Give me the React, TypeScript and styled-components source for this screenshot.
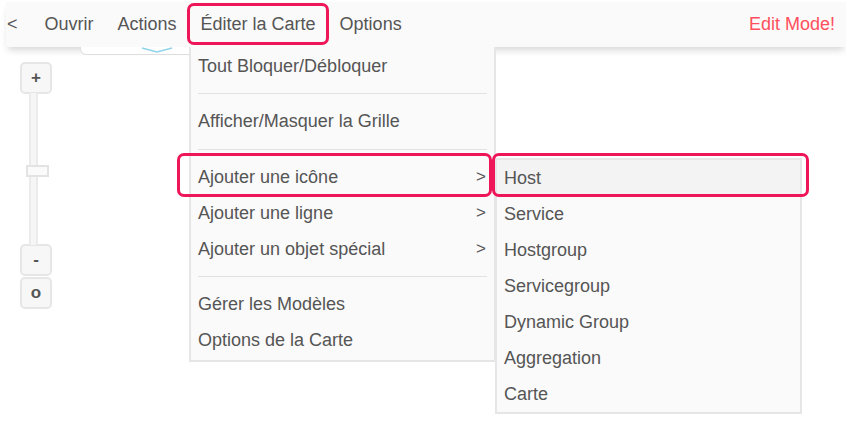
import React from "react";
import styled, { createGlobalStyle, css } from "styled-components";

const GlobalStyle = createGlobalStyle`
  html, body { margin: 0; padding: 0; background: #ffffff; }
  body { font-family: "Liberation Sans", Arial, sans-serif; }
  * { box-sizing: border-box; }
`;

const ACCENT = "#ee1558";

const Page = styled.div`
  position: relative;
  width: 846px;
  height: 423px;
  padding: 2px 0 0 6px;
  overflow: hidden;
`;

const TopBar = styled.div`
  position: relative;
  z-index: 2;
  display: flex;
  align-items: center;
  height: 45px;
  background: #fafafa;
  box-shadow: 0 5px 7px -2px rgba(0, 0, 0, 0.16);
`;

const NavItem = styled.div<{ $marked?: boolean; $back?: boolean }>`
  position: relative;
  display: flex;
  align-items: center;
  height: 100%;
  padding: ${(p) => (p.$back ? "0 15px 0 1px" : "0 12px")};
  font-size: 18px;
  color: #555555;
  white-space: nowrap;
  ${(p) =>
    p.$marked &&
    css`
      &::after {
        content: "";
        position: absolute;
        top: 1px;
        bottom: 2px;
        left: -1.5px;
        right: -1.5px;
        border: 3px solid ${ACCENT};
        border-radius: 7px;
        pointer-events: none;
        z-index: 5;
      }
    `}
`;

const Spacer = styled.div`
  flex: 1;
`;

const EditMode = styled.div`
  padding-right: 11px;
  font-size: 18px;
  color: #ff4f5e;
`;

const PullTab = styled.div`
  position: absolute;
  left: 74px;
  top: 100%;
  width: 130px;
  height: 8px;
  background: #ffffff;
  border: 1px solid #dedede;
  border-top: none;
  border-radius: 0 0 6px 6px;
  z-index: -1;
  display: flex;
  align-items: flex-start;
  padding-left: 60px;
`;

const Dropdown = styled.div`
  position: absolute;
  top: 100%;
  left: 0.5px;
  width: 307px;
  padding: 1px 0 1.5px;
  background: #fafafa;
  border: 2px solid #e6e6e6;
  border-top: none;
  z-index: 3;
`;

const MenuItem = styled.div<{ $active?: boolean }>`
  position: relative;
  display: flex;
  align-items: center;
  justify-content: space-between;
  height: 36px;
  padding: 0 8px 0 7px;
  font-size: 18px;
  color: #555555;
  white-space: nowrap;
  background: ${(p) => (p.$active ? "#f3f3f3" : "transparent")};
`;

const MarkFrame = styled.span<{ $t: number; $r: number; $b: number; $l: number }>`
  position: absolute;
  top: ${(p) => p.$t}px;
  right: ${(p) => p.$r}px;
  bottom: ${(p) => p.$b}px;
  left: ${(p) => p.$l}px;
  border: 3px solid ${ACCENT};
  border-radius: 7px;
  pointer-events: none;
  z-index: 6;
`;

const Arrow = styled.span`
  font-size: 17px;
`;

const Divider = styled.div`
  height: 1px;
  margin: 9px 7px 9.5px;
  background: #e2e2e2;
`;

const SubMenu = styled.div`
  position: absolute;
  top: -1px;
  left: calc(100% + 1px);
  width: 307px;
  background: #fafafa;
  border: 2px solid #e6e6e6;
  z-index: 4;
`;

const ZoomColumn = styled.div`
  display: flex;
  flex-direction: column;
  width: 32px;
  margin: 15px 0 0 14px;
`;

const ZoomButton = styled.div<{ $gap?: number }>`
  display: flex;
  align-items: center;
  justify-content: center;
  width: 32px;
  height: 32px;
  margin-top: ${(p) => p.$gap ?? 0}px;
  background: #f7f7f7;
  border: 2px solid #e6e6e6;
  border-radius: 5px;
  font-size: 17px;
  font-weight: bold;
  color: #555555;
`;

const Track = styled.div`
  position: relative;
  width: 9px;
  height: 152px;
  margin: -1px 0 -1px 9px;
  background: #f6f6f6;
  border-left: 2px solid #ebebeb;
  border-right: 2px solid #ebebeb;
`;

const Thumb = styled.div`
  position: absolute;
  left: -5px;
  top: 72px;
  width: 23px;
  height: 12px;
  background: #fafafa;
  border: 2px solid #e3e3e3;
`;

const subItems = [
  "Host",
  "Service",
  "Hostgroup",
  "Servicegroup",
  "Dynamic Group",
  "Aggregation",
  "Carte",
];

export default function App() {
  return (
    <>
      <GlobalStyle />
      <Page>
        <TopBar>
          <NavItem $back>&lt;</NavItem>
          <NavItem>Ouvrir</NavItem>
          <NavItem>Actions</NavItem>
          <NavItem $marked>
            Éditer la Carte
            <Dropdown>
              <MenuItem>Tout Bloquer/Débloquer</MenuItem>
              <Divider />
              <MenuItem>Afficher/Masquer la Grille</MenuItem>
              <Divider />
              <MenuItem>
                Ajouter une icône
                <Arrow>&gt;</Arrow>
                <MarkFrame $t={-6} $r={2} $b={-2} $l={-14} />
                <SubMenu>
                  {subItems.map((s, i) => (
                    <MenuItem key={s} $active={i === 0}>
                      {s}
                      {i === 0 && <MarkFrame $t={-7} $r={-9} $b={-1} $l={-5} />}
                    </MenuItem>
                  ))}
                </SubMenu>
              </MenuItem>
              <MenuItem>
                Ajouter une ligne
                <Arrow>&gt;</Arrow>
              </MenuItem>
              <MenuItem>
                Ajouter un objet spécial
                <Arrow>&gt;</Arrow>
              </MenuItem>
              <Divider />
              <MenuItem>Gérer les Modèles</MenuItem>
              <MenuItem>Options de la Carte</MenuItem>
            </Dropdown>
          </NavItem>
          <NavItem>Options</NavItem>
          <Spacer />
          <EditMode>Edit Mode!</EditMode>
          <PullTab>
            <svg width="32" height="7" viewBox="0 0 32 7">
              <polyline
                points="1,1 16,5 31,1"
                fill="none"
                stroke="#8fd3ea"
                strokeWidth="1.3"
              />
            </svg>
          </PullTab>
        </TopBar>
        <ZoomColumn>
          <ZoomButton>+</ZoomButton>
          <Track>
            <Thumb />
          </Track>
          <ZoomButton>-</ZoomButton>
          <ZoomButton $gap={1}>o</ZoomButton>
        </ZoomColumn>
      </Page>
    </>
  );
}
